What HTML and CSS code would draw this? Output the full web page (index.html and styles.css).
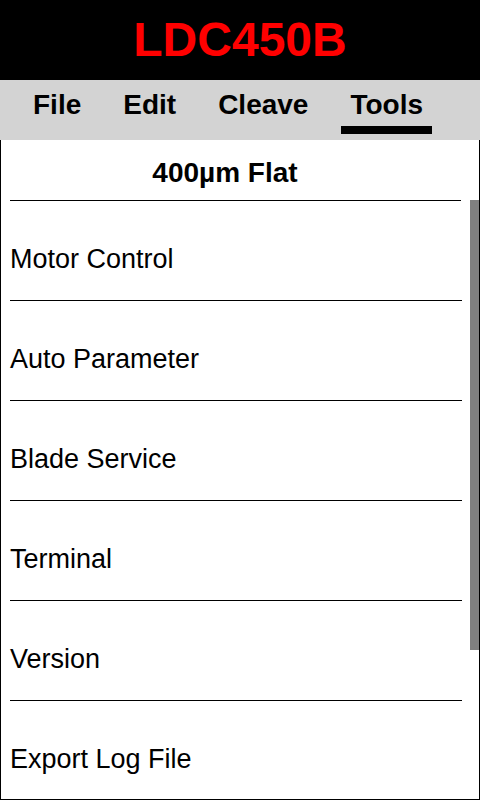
FILE: index.html
```html
<!DOCTYPE html>
<html>
  <head>
    <title>LDC450B</title>
    <link rel="stylesheet" href="styles.css">
  </head>
  <body>
    <header class="top-bar">
      <h1 class="model-name">LDC450B</h1>
    </header>

    <nav class="menu-bar">
      <div class="menu-tab">File</div>
      <div class="menu-tab">Edit</div>
      <div class="menu-tab">Cleave</div>
      <div class="menu-tab active">Tools</div>
    </nav>

    <main class="panel">
      <div class="recipe-title">400µm Flat</div>
      <div class="tool-area">
        <div class="tool-list">
          <div class="tool-item">Motor Control</div>
          <div class="tool-item">Auto Parameter</div>
          <div class="tool-item">Blade Service</div>
          <div class="tool-item">Terminal</div>
          <div class="tool-item">Version</div>
          <div class="tool-item">Export Log File</div>
          <div class="tool-item">Import Settings</div>
          <div class="tool-item">Factory Reset</div>
        </div>
        <div class="scroll-track">
          <div class="scroll-thumb"></div>
        </div>
      </div>
    </main>
  </body>
</html>
```

FILE: styles.css
```css
body {
  margin: 0;
  font-family: "Liberation Sans", Arial, sans-serif;
  color: #000;
  background-color: #fff;
}

.top-bar {
  height: 80px;
  background-color: #000;
}

.model-name {
  margin: 0;
  font-size: 48px;
  line-height: 80px;
  font-weight: bold;
  text-align: center;
  color: #ff0000;
}

.menu-bar {
  display: flex;
  align-items: flex-start;
  gap: 24px;
  height: 60px;
  padding-left: 24px;
  background-color: #d3d3d3;
  box-sizing: border-box;
}

.menu-tab {
  padding: 9px 9px 5px;
  font-size: 28px;
  font-weight: bold;
  line-height: 32px;
  border-bottom: 8px solid transparent;
}

.menu-tab.active {
  border-bottom-color: #000;
}

.panel {
  height: 660px;
  border: 1px solid #000;
  border-top: none;
  box-sizing: border-box;
  display: flex;
  flex-direction: column;
}

.recipe-title {
  height: 61px;
  flex-shrink: 0;
  margin: 0 18px 0 9px;
  padding: 17px 21px 0 0;
  box-sizing: border-box;
  font-size: 28px;
  font-weight: bold;
  line-height: 32px;
  text-align: center;
  border-bottom: 1px solid #000;
}

.tool-area {
  flex: 1;
  display: flex;
  min-height: 0;
}

.tool-list {
  flex: 1;
  overflow: hidden;
}

.scroll-track {
  width: 9px;
  margin-top: -1px;
  background-color: #fff;
}

.scroll-thumb {
  height: 450px;
  background-color: #808080;
}

.tool-item {
  height: 100px;
  margin: 0 8px 0 9px;
  padding-top: 43px;
  box-sizing: border-box;
  font-size: 27px;
  line-height: 30px;
  border-bottom: 1px solid #000;
}
```
